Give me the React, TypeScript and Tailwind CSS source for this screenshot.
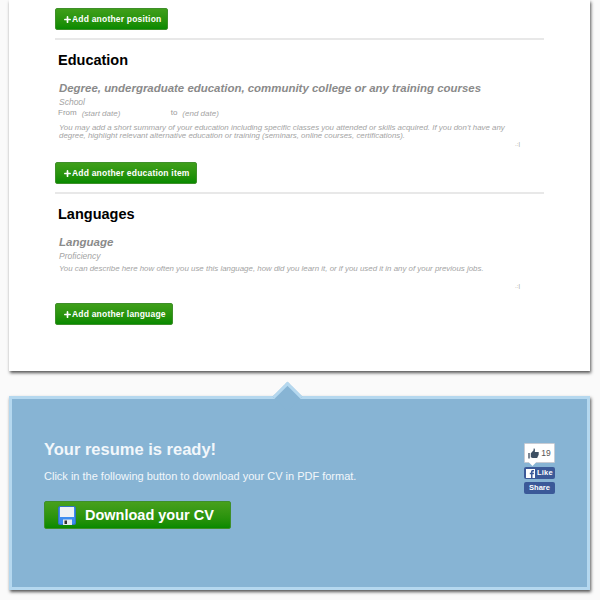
import { Plus } from "lucide-react";

function AddButton({ label, width }: { label: string; width: string }) {
  return (
    <button
      className={`flex h-[22px] ${width} items-center whitespace-nowrap rounded-[2px] border border-[#3f8f2a] bg-gradient-to-b from-[#3f9f1a] to-[#068a00] pl-[7px] text-[8.5px] font-bold tracking-[0.2px] text-white`}
    >
      <Plus size={9} strokeWidth={4.5} className="shrink-0" />
      {label}
    </button>
  );
}

function FloppyIcon() {
  return (
    <svg width="18" height="19" viewBox="0 0 18 19" className="shrink-0">
      <rect x="0" y="0" width="18" height="19" rx="2.5" fill="#3d8cf0" />
      <rect x="0.4" y="0.4" width="17.2" height="18.2" rx="2.2" fill="none" stroke="#2b5f9e" strokeWidth="0.6" />
      <rect x="2" y="1" width="14" height="10" fill="#eef1f5" />
      <rect x="5" y="13.5" width="9" height="5.5" fill="#e8ebef" />
      <rect x="6.5" y="14.5" width="2.5" height="3.5" fill="#333" />
    </svg>
  );
}

function ThumbIcon() {
  return (
    <svg width="11" height="11" viewBox="0 0 11 11">
      <rect x="0" y="5" width="2" height="5.5" fill="#7d8794" />
      <path d="M2.8 5.2 5.4 2.6 5.8 0.3C6.8 0.3 7.2 1.4 6.8 3.9H10.2C11 3.9 11 5 10.6 5.4 11 6 10.8 6.8 10.3 7 10.5 7.7 10.2 8.3 9.7 8.5 9.8 9.4 9.3 10 8.6 10H4.6L2.8 9.2Z" fill="#3d4f63" />
    </svg>
  );
}

function FacebookIcon() {
  return (
    <svg width="9" height="9" viewBox="0 0 9 9" className="shrink-0">
      <rect width="9" height="9" fill="#fff" />
      <path d="M5 9V5.2H3.8V3.8H5V2.8C5 1.6 5.7 1 6.7 1H8V2.4H7.2C6.7 2.4 6.5 2.6 6.5 3V3.8H8L7.8 5.2H6.5V9Z" fill="#3b5998" />
    </svg>
  );
}

export default function App() {
  return (
    <div className="h-[600px] w-[600px] overflow-hidden bg-[#fafafa] font-['Liberation_Sans',Arial,sans-serif]">
      <div className="ml-[9px] h-[371px] w-[581px] bg-white pl-[46px] pr-[46px] pt-[8px] shadow-[1px_2px_3px_#555]">
        <AddButton label="Add another position" width="w-[113px]" />
        <div className="mt-[8px] h-[2px] bg-[#e8e8e8]" />

        <h2 className="ml-[3px] mt-[11px] text-[14.5px] font-bold leading-[18px] text-black">Education</h2>
        <div className="ml-[4px] mt-[12px] text-[11.45px] font-bold italic leading-[15px] text-[#8a8a8a]">
          Degree, undergraduate education, community college or any training courses
        </div>
        <div className="ml-[4px] mt-[1px] text-[8.5px] italic leading-[10px] text-[#a4a4a4]">School</div>
        <div className="ml-[3px] flex text-[8px] leading-[12px] text-[#999]">
          <span>From</span>
          <span className="ml-[5px] mt-[1px] w-[89px] italic text-[#a4a4a4]">(start date)</span>
          <span>to</span>
          <span className="ml-[5px] mt-[1px] italic text-[#a4a4a4]">(end date)</span>
        </div>
        <div className="relative ml-[4px] mt-[4px] h-[37px] pr-[25px] text-[7.9px] italic leading-[8px] text-[#a4a4a4]">
          You may add a short summary of your education including specific classes you attended or skills acquired. If you don't have any degree, highlight relevant alternative education or training (seminars, online courses, certifications).
          <span className="absolute right-[24px] top-[16px] text-[6px] not-italic text-[#999]">.:|</span>
        </div>
        <div className="mt-[1px]">
          <AddButton label="Add another education item" width="w-[142px]" />
        </div>
        <div className="mt-[8px] h-[2px] bg-[#e8e8e8]" />

        <h2 className="ml-[3px] mt-[11px] text-[14.5px] font-bold leading-[18px] text-black">Languages</h2>
        <div className="ml-[4px] mt-[12px] text-[11.5px] font-bold italic leading-[15px] text-[#8a8a8a]">Language</div>
        <div className="ml-[4px] mt-[1px] text-[8.5px] italic leading-[10px] text-[#a4a4a4]">Proficiency</div>
        <div className="relative ml-[4px] mt-[3px] h-[35px] text-[7.9px] italic leading-[10px] text-[#a4a4a4]">
          You can describe here how often you use this language, how did you learn it, or if you used it in any of your previous jobs.
          <span className="absolute right-[24px] top-[17px] text-[6px] not-italic text-[#999]">.:|</span>
        </div>
        <div className="mt-[4px]">
          <AddButton label="Add another language" width="w-[118px]" />
        </div>
      </div>

      <div className="relative ml-[9px] mt-[25px] h-[194px] w-[581px] border-[3px] border-[#b5d8ef] bg-[#87b4d4] shadow-[1px_2px_3px_#555]">
        <div className="absolute left-[265px] top-[-13px] h-[21px] w-[21px] rotate-45 border-l-[3px] border-t-[3px] border-[#b5d8ef] bg-[#87b4d4]" />

        <div className="relative flex pl-[32px] pr-[32px] pt-[41px]">
          <div className="flex-1">
            <h1 className="text-[16.5px] font-bold leading-[19px] text-[#f2f7fb]">Your resume is ready!</h1>
            <p className="mt-[11px] text-[11px] leading-[13px] text-[#f2f7fb]">
              Click in the following button to download your CV in PDF format.
            </p>
            <button className="mt-[18px] flex h-[28px] w-[187px] items-center rounded-[2px] border border-[#3f8f2a] bg-gradient-to-b from-[#47a01c] to-[#068a00] pl-[13px] text-[14.5px] font-bold text-white">
              <FloppyIcon />
              <span className="ml-[9px] mt-[1px]">Download your CV</span>
            </button>
          </div>

          <div className="mt-[3px] flex w-[31px] flex-col">
            <div className="relative flex h-[20px] items-center justify-center gap-[2px] rounded-[1px] border border-[#c8ccd4] bg-white text-[8.5px] text-[#555]">
              <ThumbIcon />
              19
              <span className="absolute bottom-[-3px] left-[5px] h-[5px] w-[5px] rotate-45 bg-white" />
            </div>
            <div className="mt-[4px] flex h-[12px] items-center rounded-[2px] bg-[#3b5998] pl-[2px] text-[7.5px] font-bold tracking-[0.2px] text-white">
              <FacebookIcon />
              <span className="ml-[2px]">Like</span>
            </div>
            <div className="mt-[3px] flex h-[12px] items-center justify-center rounded-[2px] bg-[#3b5998] text-[7.5px] font-bold text-white">
              Share
            </div>
          </div>
        </div>
      </div>
    </div>
  );
}
